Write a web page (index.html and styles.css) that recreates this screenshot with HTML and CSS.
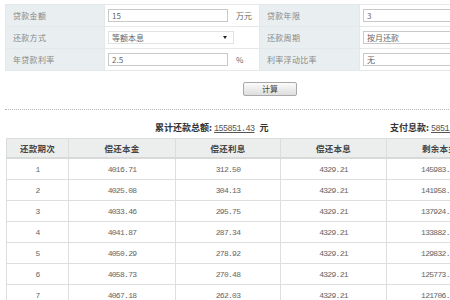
FILE: index.html
```html
<!DOCTYPE html>
<html lang="zh-CN">
<head>
<meta charset="utf-8">
<title>贷款计算器</title>
<link rel="stylesheet" href="styles.css">
</head>
<body>
<div class="page">
  <div class="form">
    <div class="lbl">贷款金额</div>
    <div class="val"><span class="box w120">15</span><span class="unit">万元</span></div>
    <div class="lbl">贷款年限</div>
    <div class="val"><span class="box wide">3</span></div>

    <div class="lbl">还款方式</div>
    <div class="val"><span class="box sel w126">等额本息<i class="arrow"></i></span></div>
    <div class="lbl">还款周期</div>
    <div class="val"><span class="box wide">按月还款</span></div>

    <div class="lbl">年贷款利率</div>
    <div class="val"><span class="box w120">2.5</span><span class="unit">%</span></div>
    <div class="lbl">利率浮动比率</div>
    <div class="val"><span class="box wide">无</span></div>
  </div>

  <div class="btnrow"><button class="btn">计算</button></div>
  <div class="dots"></div>

  <div class="summary">
    <span class="sum1"><b>累计还款总额:</b> <u class="num">155851.43</u><b class="yuan">元</b></span>
    <span class="sum2"><b>支付息款:</b> <u class="num">5851.43</u></span>
  </div>

  <table class="res">
    <colgroup>
      <col style="width:62px"><col style="width:107px"><col style="width:105px"><col style="width:106px"><col style="width:106px">
    </colgroup>
    <thead>
      <tr><th>还款期次</th><th>偿还本金</th><th>偿还利息</th><th>偿还本息</th><th>剩余本金</th></tr>
    </thead>
    <tbody>
      <tr><td>1</td><td>4016.71</td><td>312.50</td><td>4329.21</td><td>145983.29</td></tr>
      <tr><td>2</td><td>4025.08</td><td>304.13</td><td>4329.21</td><td>141958.21</td></tr>
      <tr><td>3</td><td>4033.46</td><td>295.75</td><td>4329.21</td><td>137924.75</td></tr>
      <tr><td>4</td><td>4041.87</td><td>287.34</td><td>4329.21</td><td>133882.88</td></tr>
      <tr><td>5</td><td>4050.29</td><td>278.92</td><td>4329.21</td><td>129832.59</td></tr>
      <tr><td>6</td><td>4058.73</td><td>270.48</td><td>4329.21</td><td>125773.86</td></tr>
      <tr><td>7</td><td>4067.18</td><td>262.03</td><td>4329.21</td><td>121706.68</td></tr>
    </tbody>
  </table>
</div>
</body>
</html>
```
FILE: styles.css
```css
html, body {
  margin: 0;
  padding: 0;
  background: #fff;
  overflow: hidden;
}
body {
  font-family: "Noto Sans CJK SC", "Liberation Sans", sans-serif;
  font-size: 8px;
  color: #666;
}
.page {
  width: 500px;
  padding: 4px 0 0 5px;
}
.form {
  display: grid;
  grid-template-columns: 99px 155px 100px 140px;
  grid-auto-rows: 22px;
  border-top: 1px solid #e4e8e8;
  border-left: 1px solid #e4e8e8;
}
.lbl, .val {
  border-right: 1px solid #e4e8e8;
  border-bottom: 1px solid #e4e8e8;
  display: flex;
  align-items: center;
}
.lbl {
  background: #e9eff0;
  padding-left: 7px;
  color: #888;
  letter-spacing: 0.3px;
}
.val {
  background: #fff;
  padding-left: 3px;
}
.box {
  position: relative;
  height: 13px;
  border: 1px solid #c8c8c8;
  background: #fff;
  display: flex;
  align-items: center;
  padding-left: 3px;
  color: #666;
  font-size: 8px;
  box-sizing: border-box;
}
.w120 { width: 120px; }
.w126 { width: 126px; border-color: #e2e2e2; }
.wide { width: 140px; }
.unit {
  margin-left: 8px;
  color: #666;
  font-size: 8px;
}
.arrow {
  position: absolute;
  right: 6px;
  top: 4px;
  width: 0;
  height: 0;
  border-left: 2.5px solid transparent;
  border-right: 2.5px solid transparent;
  border-top: 3px solid #222;
}
.btnrow {
  padding: 11px 0 0 238px;
  height: 14px;
}
.btn {
  display: block;
  width: 54px;
  height: 14px;
  padding: 0;
  border: 1px solid #a9a9a9;
  border-radius: 2px;
  background: linear-gradient(#fbfbfb, #dedede);
  font-family: "Noto Sans CJK SC", sans-serif;
  font-size: 8px;
  color: #444;
  line-height: 12px;
}
.dots {
  margin-top: 13px;
  width: 450px;
  border-top: 1px dotted #b5b5b5;
}
.summary {
  position: relative;
  height: 28px;
  font-size: 9px;
  color: #333;
}
.summary b { font-weight: bold; }
.summary .yuan { margin-left: 5px; }
.sum1 {
  position: absolute;
  left: 150px;
  top: 11px;
}
.sum2 {
  position: absolute;
  left: 385px;
  top: 11px;
  white-space: nowrap;
}
.num {
  font-family: "Liberation Mono", monospace;
  font-size: 8.5px;
  letter-spacing: -0.6px;
  color: #555;
  font-weight: normal;
}
.res {
  border-collapse: collapse;
  table-layout: fixed;
  width: 486px;
  margin-left: 1px;
}
.res th {
  height: 18px;
  background: #eceeee;
  border: 1px solid #dcdcdc;
  border-bottom: 2px solid #d8dada;
  color: #444;
  font-weight: bold;
  font-size: 8.5px;
  letter-spacing: 0.3px;
  padding: 0;
}
.res td {
  height: 20px;
  border: 1px solid #dedede;
  text-align: center;
  font-family: "Liberation Mono", monospace;
  font-size: 8px;
  letter-spacing: -0.7px;
  color: #666;
  padding: 0;
  white-space: nowrap;
  overflow: hidden;
}
```
